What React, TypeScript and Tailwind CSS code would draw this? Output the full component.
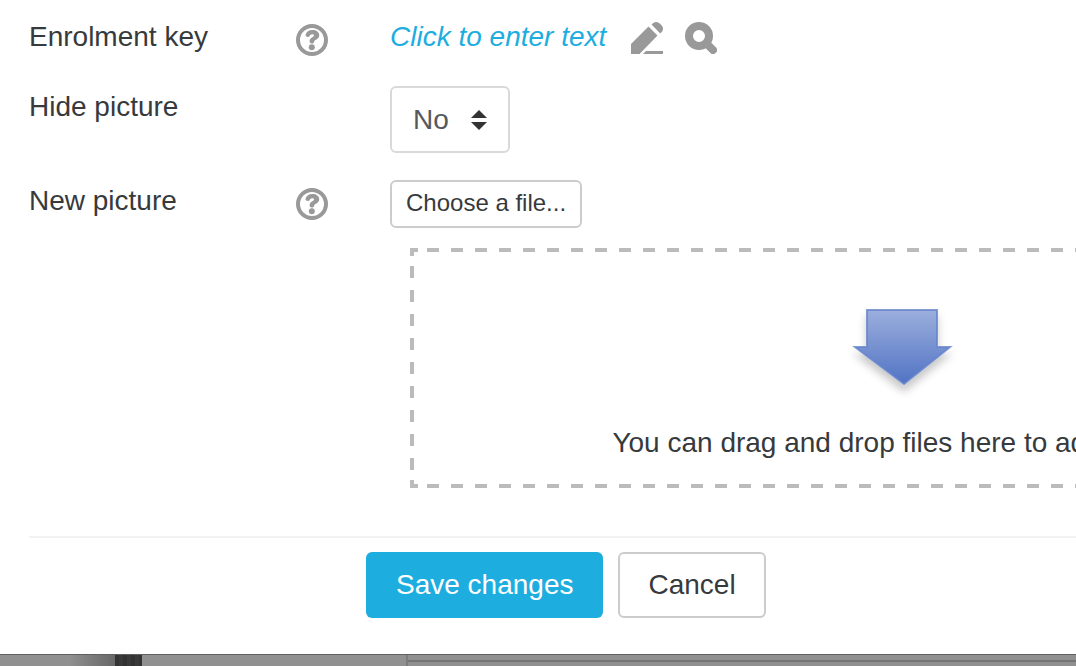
const HelpIcon = () => (
   <svg viewBox="0 0 32 32" className="size-8" aria-hidden="true">
      <circle cx="16" cy="16" r="14" fill="none" stroke="#999" strokeWidth="4" />
      <path
         d="M9.600 10.800C10.400 7.600 12.800 6 16.400 6c4 0 6.800 2 6.800 5.200 0 4.400-4.600 4-5 6.200-.3 1.400-1 2-2.400 2-1.500 0-2.400-1-2.200-2.600.5-3.400 4.400-3.600 4.400-5.200 0-.9-.8-1.300-1.800-1.300-1.400 0-1.900.7-2.600 1.800-.6 1-1.600 1.200-2.600.7-1-.4-1.600-1-1.400-2z"
         fill="#999"
      />
      <circle cx="15.800" cy="23.200" r="3" fill="#999" />
   </svg>
);

const PencilIcon = () => (
   <svg viewBox="0 0 32 32" className="size-8" fill="#999" aria-hidden="true">
      <path d="M0 32V22L17.500 4.500l9 9L9 31.500V32z" />
      <path d="M20.500 2.600l1.200-1.200c2-1.900 4.900-1.900 7 .1l1.800 1.800c2 2 2 4.900 0 6.900l-1.200 1.200z" />
      <path d="M15 29h17v3H12z" />
   </svg>
);

const SearchIcon = () => (
   <svg viewBox="0 0 32 32" className="size-8" fill="none" stroke="#999" aria-hidden="true">
      <circle cx="14" cy="14" r="10" strokeWidth="8" />
      <path d="M22 22l6 6" strokeWidth="8" strokeLinecap="round" />
   </svg>
);

const SortArrows = () => (
   <svg
      viewBox="0 0 16 20"
      fill="#333"
      className="absolute right-[23px] top-6 h-5 w-4 pointer-events-none"
      aria-hidden="true">
      <path d="M8 0l8 8H0zM8 20l8-8H0z" />
   </svg>
);

const DropArrow = () => (
   <svg viewBox="0 0 120 100" className="w-[120px] h-[100px]" aria-hidden="true">
      <defs>
         <linearGradient id="arrowFill" x1="0" y1="0" x2="0" y2="1">
            <stop offset="0" stopColor="#9bafdd" />
            <stop offset="1" stopColor="#5173c4" />
         </linearGradient>
         <filter id="arrowShadow" x="-20%" y="-20%" width="140%" height="150%">
            <feDropShadow dx="0" dy="7" stdDeviation="4" floodColor="#000" floodOpacity="0.22" />
         </filter>
      </defs>
      <path
         d="M23 10h70v37h13L60 84 11 47h12z"
         fill="url(#arrowFill)"
         stroke="#6583cb"
         strokeOpacity="0.8"
         strokeWidth="2"
         filter="url(#arrowShadow)"
      />
   </svg>
);

const rowStyle = "grid grid-cols-[267px_94px_1fr] items-start";

const App = () => {
   return (
      <div className="flex flex-col min-h-screen overflow-hidden bg-[#909090] font-['Liberation_Sans',Arial,sans-serif] text-[28px] leading-[42px] text-[#373a3c]">
         <form className="bg-white pl-[29px] pt-4 pb-9" onSubmit={(e) => e.preventDefault()}>
            <div className={`${rowStyle} mb-7`}>
               <span>Enrolment key</span>
               <button type="button" className="mt-2 w-8" aria-label="Help with Enrolment key">
                  <HelpIcon />
               </button>
               <div className="flex items-start">
                  <a href="#" className="italic text-[#1eaddf]">
                     Click to enter text
                  </a>
                  <button type="button" className="mt-[6px] ml-[25px]" aria-label="Edit">
                     <PencilIcon />
                  </button>
                  <button type="button" className="mt-[6px] ml-[22px]" aria-label="Reveal">
                     <SearchIcon />
                  </button>
               </div>
            </div>

            <div className={`${rowStyle} mb-[27px]`}>
               <label htmlFor="hidepicture" className="col-span-2">
                  Hide picture
               </label>
               <div className="relative w-[120px]">
                  <select
                     id="hidepicture"
                     defaultValue="No"
                     className="block w-full h-[67px] pl-[21px] appearance-none bg-white border-2 border-[#d9d9d9] rounded-md text-[#55595c]">
                     <option>No</option>
                     <option>Yes</option>
                  </select>
                  <SortArrows />
               </div>
            </div>

            <div className={rowStyle}>
               <span>New picture</span>
               <button type="button" className="mt-2 w-8" aria-label="Help with New picture">
                  <HelpIcon />
               </button>
               <div>
                  <button
                     type="button"
                     className="block h-12 px-[14px] pb-[2px] border-2 border-[#ccc] rounded-md text-2xl">
                     Choose a file...
                  </button>
                  {/* 12px dashes every 24px, with a short solid piece at each corner */}
                  <div className="flex flex-col items-center ml-5 mt-5 h-60 min-w-[988px] pt-[52px] whitespace-nowrap [--d:#bbb] [background:linear-gradient(var(--d),var(--d))_0_0/8px_4px_no-repeat,linear-gradient(var(--d),var(--d))_0_0/4px_8px_no-repeat,linear-gradient(var(--d),var(--d))_0_100%/8px_4px_no-repeat,linear-gradient(var(--d),var(--d))_0_100%/4px_8px_no-repeat,linear-gradient(90deg,var(--d)_50%,transparent_50%)_17px_0/24px_4px_repeat-x,linear-gradient(90deg,var(--d)_50%,transparent_50%)_17px_100%/24px_4px_repeat-x,linear-gradient(var(--d)_50%,transparent_50%)_0_18px/4px_24px_repeat-y,linear-gradient(var(--d)_50%,transparent_50%)_100%_18px/4px_24px_repeat-y]">
                     <DropArrow />
                     <p className="mt-[22px] pr-4">You can drag and drop files here to add them.</p>
                  </div>
               </div>
            </div>

            <hr className="mt-12 border-t-2 border-[#f2f2f2]" />

            <div className="flex gap-[15px] mt-[14px] pl-[337px]">
               <button type="submit" className="h-[66px] px-[30px] rounded-md bg-[#1eaddf] text-white">
                  Save changes
               </button>
               <button type="button" className="h-[66px] px-7 border-2 border-[#ccc] rounded-md">
                  Cancel
               </button>
            </div>
         </form>

         {/* dimmed page behind the dialog */}
         <div className="flex flex-1 min-h-3 border-t border-[#606060]">
            <div className="w-[115px] bg-linear-to-r from-[#909090] from-60% to-[#686868]" />
            <div className="w-[27px] bg-[repeating-linear-gradient(90deg,#333_0_4px,#3a3a3a_4px_8px)]" />
            <div className="w-[264px]" />
            <div className="flex-1 border-l-2 border-[#7c7c7c] pt-[5px]">
               <div className="h-[2px] bg-[#757575]" />
            </div>
         </div>
      </div>
   );
};

export default App;
